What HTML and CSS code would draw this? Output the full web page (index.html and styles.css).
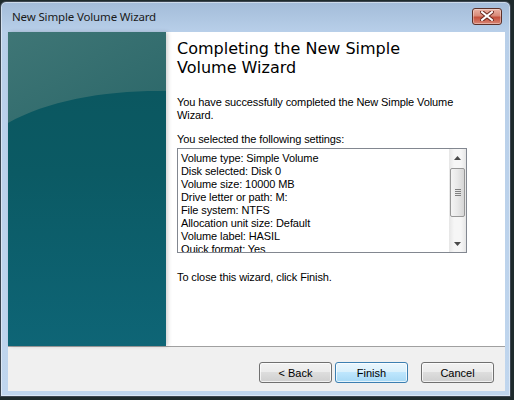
FILE: index.html
```html
<!DOCTYPE html>
<html lang="en">
<head>
    <meta charset="UTF-8">
    <title>New Simple Volume Wizard</title>
    <link rel="stylesheet" href="styles.css">
</head>
<body>
    <div class="window">
        <div class="titlebar">
            <span class="title">New Simple Volume Wizard</span>
            <button class="close-btn" aria-label="Close">
                <svg width="14" height="10" viewBox="0 0 14 10">
                    <path d="M2 1 L12 9 M12 1 L2 9" stroke="#6b2a20" stroke-width="4" stroke-linecap="square"/>
                    <path d="M2 1 L12 9 M12 1 L2 9" stroke="#ffffff" stroke-width="2" stroke-linecap="square"/>
                </svg>
            </button>
        </div>

        <div class="client">
            <div class="main">
                <div class="side-art">
                    <svg width="158" height="314" viewBox="0 0 158 314" preserveAspectRatio="none">
                        <defs>
                            <linearGradient id="top" x1="0" y1="0" x2="1" y2="1">
                                <stop offset="0" stop-color="#3f7676"/>
                                <stop offset="1" stop-color="#2b6769"/>
                            </linearGradient>
                            <linearGradient id="low" x1="0" y1="0" x2="0" y2="1">
                                <stop offset="0" stop-color="#0b555d"/>
                                <stop offset="0.45" stop-color="#0b5a64"/>
                                <stop offset="1" stop-color="#0e6576"/>
                            </linearGradient>
                        </defs>
                        <rect width="158" height="314" fill="url(#low)"/>
                        <path d="M0 0 H158 V59 C100 58 40 68 0 91 Z" fill="url(#top)"/>
                    </svg>
                </div>

                <div class="content">
                    <h1>Completing the New Simple Volume Wizard</h1>
                    <p class="intro">You have successfully completed the New Simple Volume Wizard.</p>
                    <p class="label">You selected the following settings:</p>

                    <div class="listbox">
                        <div class="list-items">
                            <div>Volume type: Simple Volume</div>
                            <div>Disk selected: Disk 0</div>
                            <div>Volume size: 10000 MB</div>
                            <div>Drive letter or path: M:</div>
                            <div>File system: NTFS</div>
                            <div>Allocation unit size: Default</div>
                            <div>Volume label: HASIL</div>
                            <div>Quick format: Yes</div>
                        </div>
                        <div class="scrollbar">
                            <div class="arrow">
                                <svg width="7" height="4" viewBox="0 0 7 4"><path d="M0 4 L3.5 0 L7 4 Z" fill="#4a4a4a"/></svg>
                            </div>
                            <div class="track">
                                <div class="thumb">
                                    <span></span><span></span><span></span><span></span>
                                </div>
                            </div>
                            <div class="arrow">
                                <svg width="7" height="4" viewBox="0 0 7 4"><path d="M0 0 L7 0 L3.5 4 Z" fill="#4a4a4a"/></svg>
                            </div>
                        </div>
                    </div>

                    <p class="closing">To close this wizard, click Finish.</p>
                </div>
            </div>

            <div class="button-bar">
                <button class="btn">&lt; Back</button>
                <button class="btn default">Finish</button>
                <button class="btn cancel">Cancel</button>
            </div>
        </div>
    </div>
</body>
</html>
```

FILE: styles.css
```css
body {
    margin: 0;
    background: #1e2a2c;
    font-family: "Liberation Sans", Arial, sans-serif;
    font-size: 11px;
    color: #000000;
}
.window {
    width: 509px;
    height: 394px;
    margin-top: 1px;
    border: 1px solid #3b4550;
    border-radius: 6px 6px 0 0;
    background: linear-gradient(#a3bcd9, #b8cfe9 30px, #c0d6ee);
    box-shadow: inset 0 0 0 1px rgba(255,255,255,0.45);
    display: flex;
    flex-direction: column;
}
.titlebar {
    height: 30px;
    display: flex;
    align-items: center;
    padding: 0 8px 0 11px;
}
.title {
    font-family: "Noto Sans", sans-serif;
    font-size: 11.5px;
    letter-spacing: -0.15px;
    flex: 1;
    color: #1a1a1a;
    margin-top: -1px;
}
.close-btn {
    width: 30px;
    height: 17px;
    margin-top: -2px;
    border: 1px solid #5c3028;
    border-radius: 3px;
    background: linear-gradient(#eab2a4, #d98a78 45%, #c4503c 55%, #d98675);
    box-shadow: inset 0 0 0 1px rgba(255,255,255,0.35);
    display: flex;
    align-items: center;
    justify-content: center;
    padding: 0;
}
.client {
    flex: 1;
    margin: 0 5px 5px 7px;
    display: flex;
    flex-direction: column;
    background: #f0f0f0;
}
.main {
    height: 314px;
    display: flex;
    background: #ffffff;
    border-bottom: 1px solid #a0a0a0;
}
.side-art {
    width: 158px;
    height: 314px;
    box-shadow: 2px 0 4px rgba(0,0,0,0.18);
    position: relative;
}
.content {
    flex: 1;
    padding: 7px 0 0 11px;
    letter-spacing: -0.1px;
}
h1 {
    font-family: "DejaVu Sans", Verdana, sans-serif;
    font-weight: normal;
    font-size: 16px;
    line-height: 19px;
    letter-spacing: 0;
    width: 270px;
    margin: 0 0 19px 0;
}
p {
    margin: 0;
    line-height: 13px;
}
.intro {
    width: 290px;
    margin-bottom: 11px;
}
.label {
    margin-bottom: 2px;
}
.listbox {
    width: 288px;
    height: 103px;
    border: 1px solid #828790;
    display: flex;
    background: #ffffff;
}
.list-items {
    flex: 1;
    padding: 3px 0 0 3px;
    line-height: 13px;
    overflow: hidden;
}
.scrollbar {
    width: 17px;
    display: flex;
    flex-direction: column;
    background: linear-gradient(90deg, #e6e6e6, #f6f6f6 30%, #f6f6f6 70%, #e6e6e6);
}
.arrow {
    height: 17px;
    display: flex;
    align-items: center;
    justify-content: center;
}
.track {
    flex: 1;
    padding: 2px 1px;
}
.thumb {
    height: 47px;
    border: 1px solid #979797;
    border-radius: 2px;
    background: linear-gradient(90deg, #f4f4f4, #e8e8e8 50%, #d6d6d6);
    display: flex;
    flex-direction: column;
    align-items: center;
    justify-content: center;
    gap: 1px;
}
.thumb span {
    width: 6px;
    height: 1px;
    background: #808080;
}
.closing {
    margin-top: 18px;
}
.button-bar {
    flex: 1;
    display: flex;
    justify-content: flex-end;
    align-items: flex-start;
    padding: 15px 11px 0 0;
    gap: 3px;
}
.btn {
    width: 73px;
    height: 21px;
    font-family: "Liberation Sans", Arial, sans-serif;
    font-size: 11px;
    border: 1px solid #707070;
    border-radius: 3px;
    background: linear-gradient(#f2f2f2, #ebebeb 50%, #dddddd 50%, #cfcfcf);
    box-shadow: inset 0 0 0 1px rgba(255,255,255,0.7);
    padding: 0;
    color: #000000;
}
.btn.default {
    border-color: #3c7fb1;
    background: linear-gradient(#eaf6fd, #d9f0fc 50%, #bee6fd 50%, #a7d9f5);
}
.btn.cancel {
    margin-left: 10px;
}
```
